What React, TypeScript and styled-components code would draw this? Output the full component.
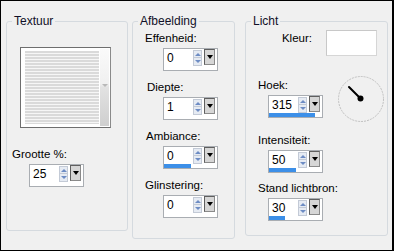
import styled, { createGlobalStyle } from 'styled-components'

const GlobalStyle = createGlobalStyle`
  html, body {
    margin: 0;
    padding: 0;
    background: #f0f0f0;
  }
  * {
    box-sizing: border-box;
  }
`

interface SpinProps {
  value: string
  fill?: number
}

const SpinBox = ({ value, fill }: SpinProps) => {
  return (
    <SpinFrame>
      <SpinTop>
        <SpinValue>{value}</SpinValue>
        <SpinButtons>
          <SpinHalf>
            <ArrowUp />
          </SpinHalf>
          <SpinHalf>
            <ArrowDown />
          </SpinHalf>
        </SpinButtons>
        <DropButton>
          <DropArrow />
        </DropButton>
      </SpinTop>
      <SpinTrack>{fill !== undefined && <SpinBar style={{ width: `${fill * 100}%` }} />}</SpinTrack>
    </SpinFrame>
  )
}

interface FieldProps {
  label: string
  value: string
  fill?: number
  labelIndent: number
  boxIndent: number
  first?: boolean
}

const Field = ({ label, value, fill, labelIndent, boxIndent, first }: FieldProps) => {
  return (
    <FieldBlock first={first}>
      <FieldLabel indent={labelIndent}>{label}</FieldLabel>
      <SpinSlot indent={boxIndent}>
        <SpinBox value={value} fill={fill} />
      </SpinSlot>
    </FieldBlock>
  )
}

const Dial = () => (
  <DialBox>
    <svg width="48" height="48" viewBox="0 0 48 48">
      <circle cx="24" cy="24" r="22.5" fill="none" stroke="#c0c0c0" strokeWidth="1" strokeDasharray="2 1" />
      <line x1="23.5" y1="23.5" x2="12" y2="12" stroke="#000" strokeWidth="2" strokeLinecap="round" />
      <circle cx="23.5" cy="23.5" r="3" fill="#000" />
    </svg>
  </DialBox>
)

const App = () => {
  return (
    <>
      <GlobalStyle />
      <Window>
        <Group width={122} height={217} gap={4}>
          <Legend>Textuur</Legend>
          <Preview>
            <Stripes />
            <PreviewScroll>
              <ScrollGrip />
            </PreviewScroll>
          </Preview>
          <FieldBlock>
            <FieldLabel indent={5} style={{ marginTop: 10 }}>
              Grootte %:
            </FieldLabel>
            <SpinSlot indent={22}>
              <SpinBox value="25" />
            </SpinSlot>
          </FieldBlock>
        </Group>

        <Group width={103} height={225} gap={10}>
          <Legend>Afbeelding</Legend>
          <Field first label="Effenheid:" value="0" labelIndent={12} boxIndent={30} />
          <Field label="Diepte:" value="1" labelIndent={14} boxIndent={30} />
          <Field label="Ambiance:" value="0" fill={0.5} labelIndent={13} boxIndent={30} />
          <Field label="Glinstering:" value="0" labelIndent={12} boxIndent={30} />
        </Group>

        <Group width={143} height={222} gap={0}>
          <Legend>Licht</Legend>
          <ColorRow>
            <ColorLabel>Kleur:</ColorLabel>
            <ColorSwatch />
          </ColorRow>
          <AngleRow>
            <AngleField>
              <FieldLabel indent={12}>Hoek:</FieldLabel>
              <SpinSlot indent={22}>
                <SpinBox value="315" fill={315 / 360} />
              </SpinSlot>
            </AngleField>
            <Dial />
          </AngleRow>
          <LightField>
            <FieldLabel indent={12}>Intensiteit:</FieldLabel>
            <SpinSlot indent={22}>
              <SpinBox value="50" fill={0.5} />
            </SpinSlot>
          </LightField>
          <LightField>
            <FieldLabel indent={12}>Stand lichtbron:</FieldLabel>
            <SpinSlot indent={22}>
              <SpinBox value="30" fill={0.3} />
            </SpinSlot>
          </LightField>
        </Group>
      </Window>
    </>
  )
}

export default App

const Window = styled.div`
  width: 394px;
  height: 251px;
  border: 1px solid #000;
  border-right-width: 2px;
  background: #f0f0f0;
  padding: 13px 0 0 5px;
  display: flex;
  align-items: flex-start;
  font-family: 'Liberation Sans', Arial, sans-serif;
  font-size: 11.5px;
  color: #000;
`

const Group = styled.fieldset<{ width: number; height: number; gap: number }>`
  flex: 0 0 auto;
  width: ${({ width }) => width}px;
  height: ${({ height }) => height}px;
  margin: 0 ${({ gap }) => gap}px 0 0;
  padding: 0;
  min-width: 0;
  border: 1px solid #d5dadf;
  border-radius: 3px;
  display: flex;
  flex-direction: column;
  align-items: flex-start;
`

const Legend = styled.legend`
  margin-left: 5px;
  padding: 0 2px;
  font-size: 12px;
  line-height: 14px;
  color: #101028;
`

const Preview = styled.div`
  margin: 19px 0 0 13px;
  width: 91px;
  height: 81px;
  border: 1px solid #6e6e6e;
  border-right-color: #8a8a8a;
  background: #fff;
  padding: 3px 1px 3px 4px;
  display: flex;
  gap: 1px;
`

const Stripes = styled.div`
  flex: 1;
  background: repeating-linear-gradient(to bottom, #dadada 0 2px, #f6f6f6 2px 3px);
`

const PreviewScroll = styled.div`
  width: 9px;
  margin: -2px 0;
  background: linear-gradient(to bottom, #fafafa 0, #f0f0f0 45%, #e2e2e2 50%, #cfcfcf 100%);
  position: relative;
`

const ScrollGrip = styled.div`
  position: absolute;
  top: 35px;
  left: 2px;
  width: 0;
  height: 0;
  border-left: 3px solid transparent;
  border-right: 3px solid transparent;
  border-top: 3px solid #b8b8b8;
`

const FieldBlock = styled.div<{ first?: boolean }>`
  display: flex;
  flex-direction: column;
  align-items: flex-start;
  margin-top: ${({ first }) => (first ? 3 : 9)}px;
  width: 100%;
`

const FieldLabel = styled.div<{ indent: number }>`
  padding-left: ${({ indent }) => indent}px;
  line-height: 14px;
  white-space: nowrap;
`

const SpinSlot = styled.div<{ indent: number }>`
  margin: 3px 0 0 ${({ indent }) => indent}px;
`

const SpinFrame = styled.div`
  width: 55px;
  height: 23px;
  border: 1px solid #a9adb2;
  background: #fff;
  display: flex;
  flex-direction: column;
`

const SpinTop = styled.div`
  height: 17px;
  display: flex;
  align-items: flex-start;
`

const SpinValue = styled.div`
  flex: 1;
  padding: 2px 0 0 3px;
  font-size: 12px;
  line-height: 14px;
`

const SpinButtons = styled.div`
  width: 9px;
  margin-top: 1px;
  display: flex;
  flex-direction: column;
`

const SpinHalf = styled.div`
  height: 8px;
  border: 1px solid #c3cad6;
  background: #e6ebf3;
  display: flex;
  align-items: center;
  justify-content: center;

  & + & {
    border-top: none;
  }
`

const ArrowUp = styled.div`
  width: 0;
  height: 0;
  border-left: 3px solid transparent;
  border-right: 3px solid transparent;
  border-bottom: 3px solid #6d8cc4;
`

const ArrowDown = styled(ArrowUp)`
  border-bottom: none;
  border-top: 3px solid #6d8cc4;
`

const DropButton = styled.div`
  width: 11px;
  height: 16px;
  margin: 0 2px 0 2px;
  border: 1px solid #5f5f5f;
  border-right-color: #8a8a8a;
  border-bottom-color: #8a8a8a;
  background: #d6d6d6;
  display: flex;
  align-items: center;
  justify-content: center;
`

const DropArrow = styled.div`
  width: 0;
  height: 0;
  border-left: 3.5px solid transparent;
  border-right: 3.5px solid transparent;
  border-top: 4px solid #000;
`

const SpinTrack = styled.div`
  height: 4px;
`

const SpinBar = styled.div`
  height: 100%;
  background: #3c8fe8;
`

const ColorRow = styled.div`
  width: 100%;
  margin-top: 2px;
  display: flex;
  justify-content: flex-end;
  align-items: flex-start;
  padding-right: 10px;
`

const ColorLabel = styled.div`
  margin-top: 1px;
  line-height: 14px;
`

const ColorSwatch = styled.div`
  margin-left: 14px;
  width: 51px;
  height: 26px;
  border: 1px solid #d6d6d6;
  border-top-color: #c8c8c8;
  border-left-color: #c8c8c8;
  background: #fff;
`

const AngleRow = styled.div`
  width: 100%;
  margin-top: 19px;
  display: flex;
  align-items: flex-start;
`

const AngleField = styled.div`
  padding-top: 3px;
  display: flex;
  flex-direction: column;
  align-items: flex-start;
`

const DialBox = styled.div`
  margin-left: 14px;
`

const LightField = styled.div`
  margin-top: 8px;
  display: flex;
  flex-direction: column;
  align-items: flex-start;
`
